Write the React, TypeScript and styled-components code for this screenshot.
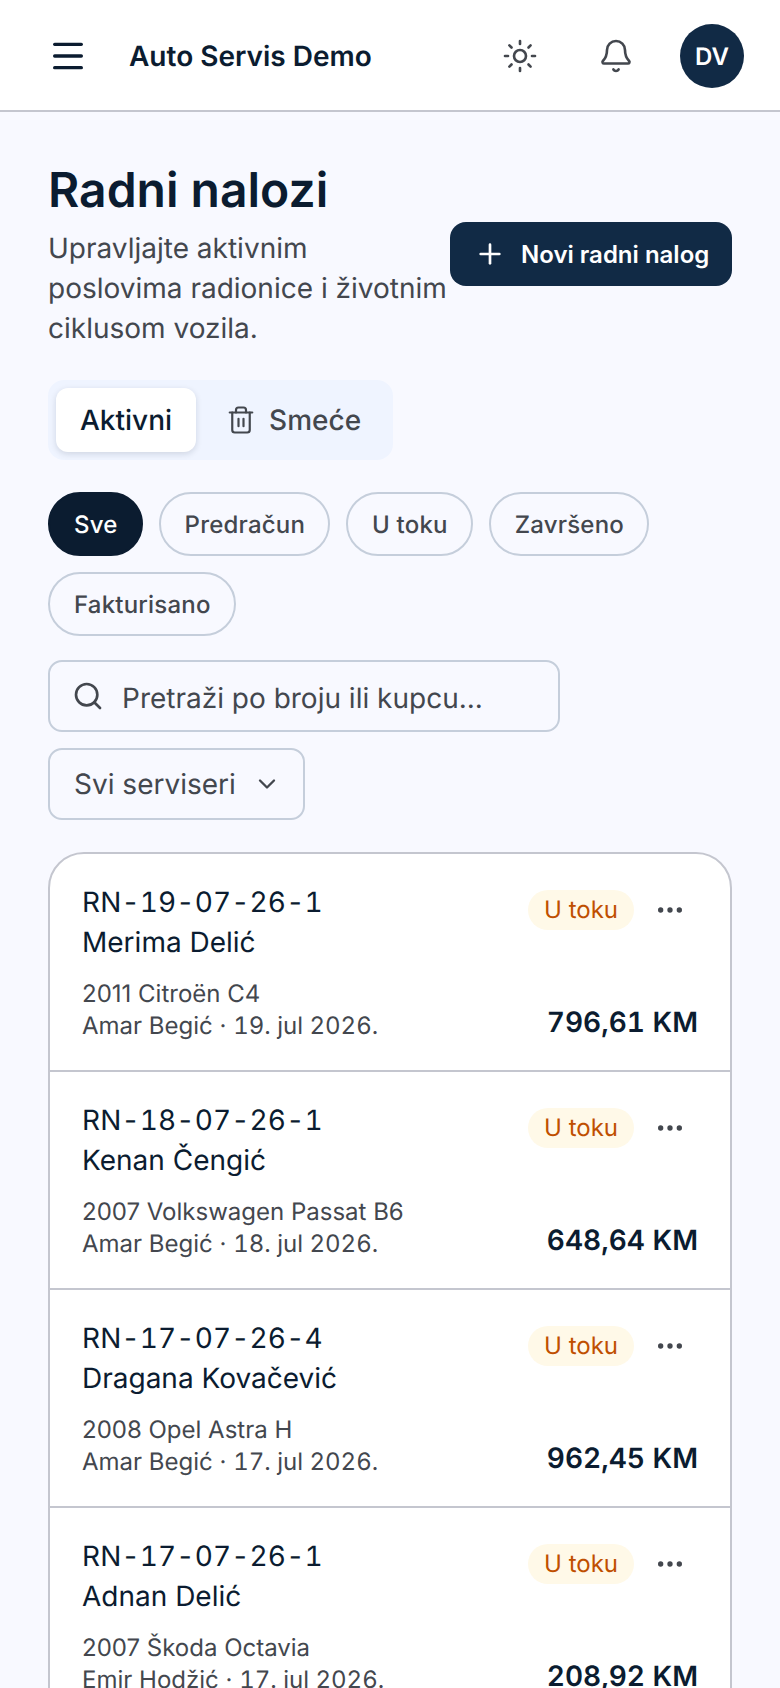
import React from 'react';
import styled, { createGlobalStyle } from 'styled-components';
import { Bell, ChevronDown, Ellipsis, Menu, Plus, Search, Sun, Trash2 } from 'lucide-react';

const GlobalStyle = createGlobalStyle`
  html, body {
    margin: 0;
    padding: 0;
    background: #f8f9ff;
    font-family: Inter, 'Noto Sans', sans-serif;
    color: #0b1c30;
    text-rendering: geometricPrecision;
  }
  html, body, #root {
    height: 1688px;
    overflow: hidden;
  }
  * {
    box-sizing: border-box;
  }
`;

const Header = styled.header`
  height: 112px;
  background: #fff;
  border-bottom: 2px solid #c4c6cf;
  display: flex;
  align-items: center;
  padding: 2px 36px 0 48px;
`;

const MenuButton = styled.div`
  display: flex;
  color: #0b1c30;
  margin-right: 41px;
`;

const Brand = styled.div`
  flex: 1;
  font-size: 28px;
  font-weight: 600;
  color: #0b1c30;
`;

const HeaderIcon = styled.div`
  display: flex;
  color: #43474e;
  margin-right: 60px;
`;

const BellIcon = styled(HeaderIcon)`
  margin-right: 46px;
`;

const Avatar = styled.div`
  width: 64px;
  height: 64px;
  border-radius: 50%;
  background: #112a45;
  color: #fff;
  display: flex;
  align-items: center;
  justify-content: center;
  font-size: 24px;
  font-weight: 600;
`;

const Main = styled.main`
  padding: 48px 48px 0;
`;

const TitleRow = styled.div`
  display: flex;
  align-items: center;
  justify-content: space-between;
`;

const TitleBlock = styled.div`
  width: 400px;
`;

const Title = styled.h1`
  margin: 0 0 8px;
  font-size: 48px;
  line-height: 60px;
  font-weight: 600;
  color: #0b1c30;
`;

const Subtitle = styled.p`
  margin: 0;
  font-size: 28px;
  line-height: 40px;
  color: #43474e;
`;

const NewButton = styled.button`
  display: flex;
  align-items: center;
  gap: 15px;
  height: 64px;
  width: 282px;
  padding: 0 0 0 24px;
  border: 0;
  border-radius: 16px;
  background: #112a45;
  color: #fff;
  font-family: inherit;
  font-size: 24px;
  font-weight: 600;
  white-space: nowrap;

  svg {
    flex: none;
  }
`;

const Tabs = styled.div`
  display: inline-flex;
  gap: 6px;
  margin-top: 32px;
  padding: 8px;
  height: 80px;
  background: #eff4ff;
  border-radius: 16px;
`;

const Tab = styled.div<{ $active?: boolean }>`
  display: flex;
  align-items: center;
  gap: 13px;
  padding: 0 24px;
  border-radius: 12px;
  font-size: 28px;
  font-weight: 500;
  background: ${({ $active }) => ($active ? '#fff' : 'transparent')};
  color: ${({ $active }) => ($active ? '#0b1c30' : '#43474e')};
  box-shadow: ${({ $active }) => ($active ? '0 2px 6px rgba(13, 28, 50, 0.14)' : 'none')};
`;

const Chips = styled.div`
  display: flex;
  flex-wrap: wrap;
  gap: 16px;
  margin-top: 32px;
`;

const Chip = styled.div<{ $active?: boolean }>`
  height: 64px;
  padding: 0 23px 0 24px;
  display: flex;
  align-items: center;
  border-radius: 32px;
  font-size: 24px;
  font-weight: 500;
  letter-spacing: 0.2px;
  border: 2px solid ${({ $active }) => ($active ? '#0b1c30' : '#c5cedb')};
  background: ${({ $active }) => ($active ? '#0b1c30' : 'transparent')};
  color: ${({ $active }) => ($active ? '#fff' : '#43474e')};
`;

const SearchBox = styled.div`
  display: flex;
  align-items: center;
  gap: 18px;
  width: 512px;
  height: 72px;
  margin-top: 24px;
  padding: 0 22px;
  border: 2px solid #c5cedb;
  border-radius: 14px;
  font-size: 28px;
  color: #43474e;
`;

const Placeholder = styled.span`
  padding-top: 3px;
`;

const SelectBox = styled.div`
  display: flex;
  align-items: center;
  justify-content: space-between;
  width: 257px;
  height: 72px;
  margin-top: 16px;
  padding: 0 22px 0 24px;
  border: 2px solid #c5cedb;
  border-radius: 14px;
  font-size: 28px;
  color: #43474e;
`;

const OrderList = styled.div`
  margin-top: 32px;
  background: #fff;
  border: 2px solid #c4c6cf;
  border-radius: 36px;
  overflow: hidden;
`;

const OrderRow = styled.div`
  height: 218px;
  padding: 29px 32px 0;
  border-bottom: 2px solid #c4c6cf;
  display: flex;
  flex-direction: column;
`;

const RowTop = styled.div`
  display: flex;
  justify-content: space-between;
`;

const OrderNumber = styled.div`
  font-size: 28px;
  line-height: 39px;
  letter-spacing: 0.15px;
  font-variant-numeric: tabular-nums;
  color: #0b1c30;
`;

const Customer = styled.div`
  font-size: 28px;
  line-height: 40px;
  color: #0b1c30;
`;

const RowActions = styled.div`
  display: flex;
  align-items: center;
  gap: 20px;
  height: 40px;
  margin-top: 7px;
`;

const StatusBadge = styled.span`
  padding: 0 16px 1px;
  height: 40px;
  display: flex;
  align-items: center;
  border-radius: 20px;
  background: #fff9e8;
  color: #bf4f00;
  font-size: 24px;
`;

const MoreIcon = styled.div`
  display: flex;
  color: #43474e;
  margin-right: 12px;
`;

const RowBottom = styled.div`
  display: flex;
  align-items: flex-end;
  justify-content: space-between;
  margin-top: 16px;
`;

const Meta = styled.div`
  font-size: 24px;
  line-height: 32px;
  color: #43474e;
`;

const DateText = styled.span`
  font-variant-numeric: tabular-nums;
`;

const Amount = styled.div`
  font-size: 28px;
  line-height: 32px;
  font-weight: 600;
  font-variant-numeric: tabular-nums;
  color: #0b1c30;
  margin-bottom: 4px;
`;

const orders = [
  { id: 'RN-19-07-26-1', customer: 'Merima Delić', car: '2011 Citroën C4', mechanic: 'Amar Begić', date: '19. jul 2026.', amount: '796,61 KM' },
  { id: 'RN-18-07-26-1', customer: 'Kenan Čengić', car: '2007 Volkswagen Passat B6', mechanic: 'Amar Begić', date: '18. jul 2026.', amount: '648,64 KM' },
  { id: 'RN-17-07-26-4', customer: 'Dragana Kovačević', car: '2008 Opel Astra H', mechanic: 'Amar Begić', date: '17. jul 2026.', amount: '962,45 KM' },
  { id: 'RN-17-07-26-1', customer: 'Adnan Delić', car: '2007 Škoda Octavia', mechanic: 'Emir Hodžić', date: '17. jul 2026.', amount: '208,92 KM' },
];

const filters = ['Sve', 'Predračun', 'U toku', 'Završeno', 'Fakturisano'];

export default function App() {
  return (
    <>
      <GlobalStyle />
      <Header>
        <MenuButton><Menu size={40} strokeWidth={2} /></MenuButton>
        <Brand>Auto Servis Demo</Brand>
        <HeaderIcon><Sun size={36} strokeWidth={1.75} /></HeaderIcon>
        <BellIcon><Bell size={36} strokeWidth={1.75} /></BellIcon>
        <Avatar>DV</Avatar>
      </Header>
      <Main>
        <TitleRow>
          <TitleBlock>
            <Title>Radni nalozi</Title>
            <Subtitle>Upravljajte aktivnim poslovima radionice i životnim ciklusom vozila.</Subtitle>
          </TitleBlock>
          <NewButton><Plus size={32} strokeWidth={2} />Novi radni nalog</NewButton>
        </TitleRow>
        <Tabs>
          <Tab $active>Aktivni</Tab>
          <Tab><Trash2 size={30} strokeWidth={1.75} />Smeće</Tab>
        </Tabs>
        <Chips>
          {filters.map((f, i) => (
            <Chip key={f} $active={i === 0}>{f}</Chip>
          ))}
        </Chips>
        <SearchBox><Search size={32} strokeWidth={2} /><Placeholder>Pretraži po broju ili kupcu...</Placeholder></SearchBox>
        <SelectBox>Svi serviseri<ChevronDown size={28} strokeWidth={2} /></SelectBox>
        <OrderList>
          {orders.map((o) => (
            <OrderRow key={o.id}>
              <RowTop>
                <div>
                  <OrderNumber>{o.id}</OrderNumber>
                  <Customer>{o.customer}</Customer>
                </div>
                <RowActions>
                  <StatusBadge>U toku</StatusBadge>
                  <MoreIcon><Ellipsis size={32} strokeWidth={2} /></MoreIcon>
                </RowActions>
              </RowTop>
              <RowBottom>
                <Meta>{o.car}<br />{o.mechanic} · <DateText>{o.date}</DateText></Meta>
                <Amount>{o.amount}</Amount>
              </RowBottom>
            </OrderRow>
          ))}
        </OrderList>
      </Main>
    </>
  );
}
